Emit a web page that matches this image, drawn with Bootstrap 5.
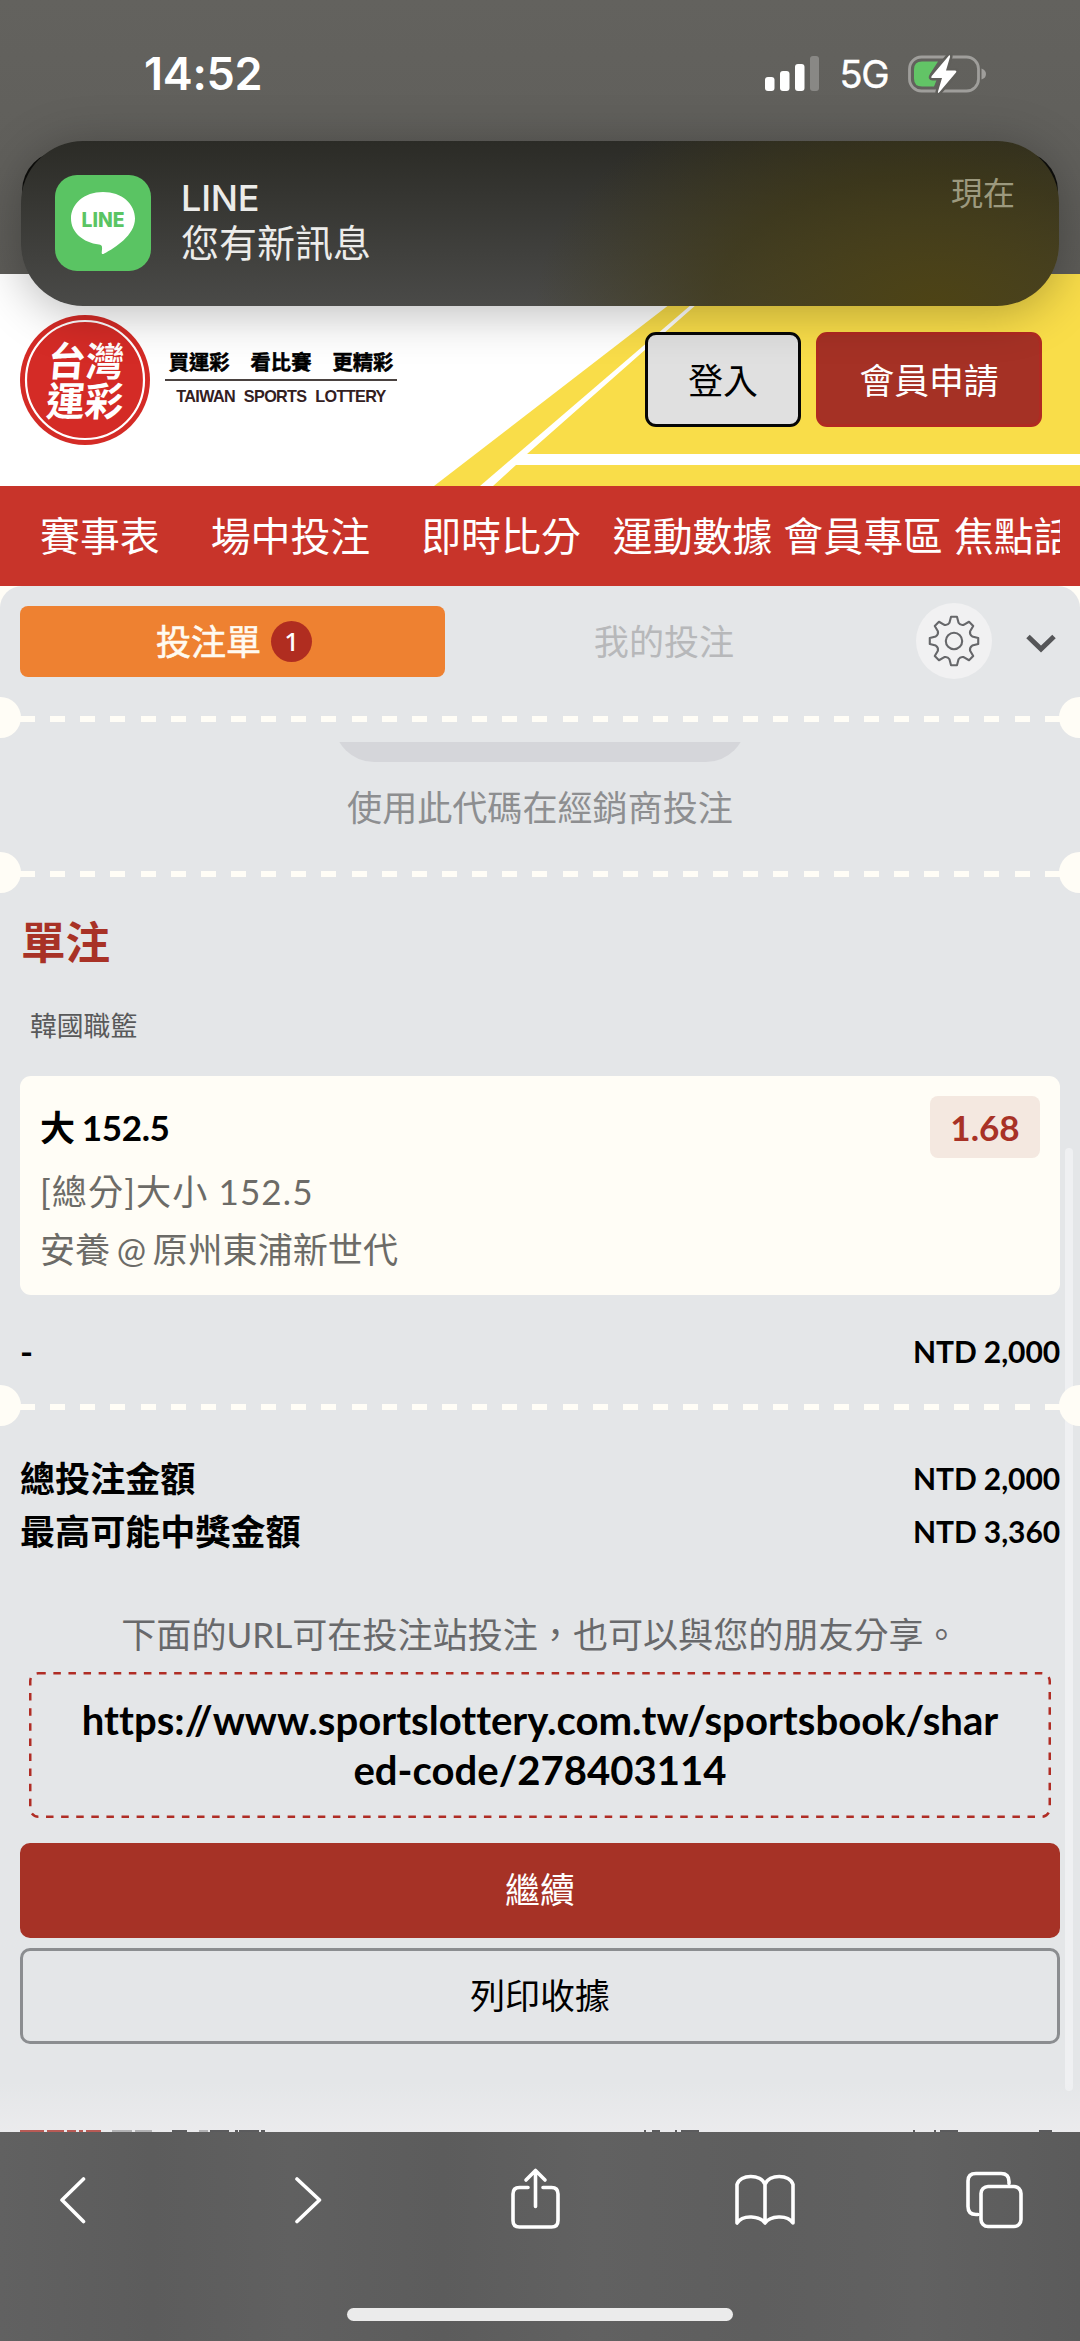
<!DOCTYPE html>
<html lang="zh-Hant">
<head>
<meta charset="utf-8">
<meta name="viewport" content="width=device-width, initial-scale=1">
<title>台灣運彩 投注單</title>
<link href="https://cdn.jsdelivr.net/npm/bootstrap@5.3.0/dist/css/bootstrap.min.css" rel="stylesheet">
<style>
body{width:1080px;height:2341px;overflow:hidden;background:#fffdf6;font-family:Lato,"Noto Sans CJK TC",sans-serif;color:#000;font-size:35.1px;line-height:50px;font-variant-ligatures:none}
svg{display:block;flex:none}
.statusbar{height:274px;background:linear-gradient(#63625e 0,#605f5b 60%,#5d5c58);color:#fff;font-family:Inter,sans-serif}
.status-row{height:148px;padding:0 93px 0 144px}
.clock{font-size:45px;font-weight:600;letter-spacing:-.3px}
.netw{font-size:38px;font-weight:400;letter-spacing:-1.5px;-webkit-text-stroke:.4px #fff;margin-left:21px}
.notice{top:141px;left:21px;width:1038px;height:165px;border-radius:62px;padding:0 44px 0 34px;z-index:5;
 background:radial-gradient(ellipse 400px 240px at 88% 100%,#4d4315 0,#41390f99 55%,#3a361500 100%),linear-gradient(#2b2b26,#4a4a48);
 font-family:Inter,"Noto Sans CJK TC",sans-serif;color:#ececea}
.notice-back{top:151px;left:22px;width:1036px;height:110px;border-radius:40px;background:#0c0c0a;z-index:4}
.notice-shade{top:141px;left:21px;width:1038px;height:165px;border-radius:62px;box-shadow:0 6px 50px rgba(0,0,0,.28);z-index:3}
.app-tile{width:96px;height:96px;border-radius:22px;background:#5ac463;margin-top:34px}
.n-title{font-size:36px;font-weight:500;line-height:40px;letter-spacing:-.2px}
.n-text{margin:37px 0 0 30px}
.n-body{font-size:38px;line-height:50px}
.n-time{font-size:32px;line-height:40px;color:#9c997e;margin-top:33px}
.site-head{height:212px;background:#fff;padding:0 38px 0 20px}
.court{inset:0}
.brand-zh{font-size:20.3px;font-weight:700;line-height:26px;gap:21px;-webkit-text-stroke:.5px #000}
.brand-en{font:bold 16.2px/22px "Liberation Sans",sans-serif;color:#33201f;word-spacing:5px;letter-spacing:-.65px;border-top:2px solid #4a4240;width:232px;margin-top:4px;padding-top:4px}
.hbtn{height:95px;border-radius:11px;font-size:34.8px;line-height:1;border-width:3px}
.hbtn-login{width:156px;background:#e0e0e0;border-color:#060606;margin-right:15px;color:#000}
.hbtn-join{width:226px;background:#a53125;border-color:#b02a22;color:#fff}
.mainnav{height:100px;background:#c8342a;color:#fff;font-size:39.9px;margin:0 20px 0 0;padding-left:40px}
.navwrap{background:#c8342a}
.mainnav a{color:#fff;text-decoration:none;white-space:nowrap;flex:none}
.slip{height:1546px;background:#e4e6e8;border-radius:22px 22px 0 0;overflow:hidden}
.tabs-row{height:111px;padding:20px 20px 0}
.tab-on{width:425px;height:71px;background:#ee8131;border-radius:8px;color:#fffaf0;gap:10px;padding-left:3px;-webkit-text-stroke:.6px #fffaf0}
.tab-on span:first-child{margin-top:-1px}
.count{width:41px;height:41px;border-radius:50%;background:#b02d20;font:500 26px/41px "Noto Sans",sans-serif;color:#fff;-webkit-text-stroke:0}
.tab-off{width:438px;height:70px;color:#b7b8ba}
.gear{width:76px;height:76px;border-radius:50%;background:#f1f1f2;margin-top:-3px}
.perf{height:41px;z-index:1}
.perf::before{content:"";display:block;height:6px;margin:3px 20px 0;background:repeating-linear-gradient(90deg,#fffdf6 0 15px,transparent 15px 30.14px)}
.perf i{width:41px;height:41px;border-radius:50%;background:#fffdf6;top:0}
.tray-clip{height:20px;overflow:hidden;margin-top:4px}
.tray{width:412px;height:100px;margin-top:-80px;border-radius:40px;background:#d5d6da}
.hint{color:#8d8e90;line-height:50px;margin-top:20px}
.h-single{font-size:44.6px;font-weight:700;color:#a83226;line-height:60px;padding:19px 20px 0 21px}
.league{font-size:26.8px;line-height:40px;color:#58595a;margin:34px 0 30px 30px}
.pick{height:219px;margin:0 20px;background:#fffdf6;border-radius:11px;padding:20px 20px 0 20px}
.pick-name{word-spacing:-1px;letter-spacing:-.4px;margin-top:-1px}
.odds{width:110px;height:62px;background:#f4e8e0;border-radius:8px;color:#a83226;line-height:62px}
.pick-line{line-height:57px;color:#6c6b67;height:57px;padding-top:1px}
.ntd{font-size:30px;font-weight:700;letter-spacing:-.1px}
.share{color:#68696b;line-height:50px;margin-top:51px;margin-bottom:13px}
.urlbox{width:1022px;height:146px;margin:0 0 25px 29px;padding:0 46px;font-size:40.1px;font-weight:700;word-break:break-all}
.wbtn{height:95px;border-radius:10px;font-size:34.9px;line-height:1;border-width:3px}
.b-go{background:#a63226;color:#fff;border-color:#a63226}
.b-print{height:96px;border-color:#8b8d90;color:#000}
.thumb{right:7px;top:562px;width:8px;height:943px;border-radius:4px;background:#eff0f2}
.fadeout{left:0;right:0;bottom:0;height:50px;background:linear-gradient(#ebebed00,#ebebed)}
.toolbar-b{height:209px;background:linear-gradient(90deg,#616161,#5c5c5c 14%,#606060 27%,#5c5c5c 41%,#616161 55%,#5e5e5e 70%,#616161 85%,#5b5b5b)}
.homebar{width:386px;height:13px;border-radius:7px;background:#ebebeb;margin:80px auto 0}
</style>
<script src="https://cdn.jsdelivr.net/npm/bootstrap@5.3.0/dist/js/bootstrap.bundle.min.js"></script>
</head>
<body class="position-relative">
<div class="statusbar">
 <div class="status-row d-flex align-items-center">
  <span class="clock">14:52</span>
  <svg class="ms-auto" width="54" height="36" viewBox="0 0 54 36" fill="#fff"><rect y="21" width="9.500" height="14" rx="3"/><rect x="15" y="15" width="9.500" height="20" rx="3"/><rect x="30" y="8" width="9.500" height="27" rx="3"/><rect x="45" width="9" height="35" rx="3" opacity=".25"/></svg>
  <span class="netw">5G</span>
  <svg style="margin-left:20px" width="79" height="42" viewBox="0 0 79 42"><rect x="1.500" y="4" width="69" height="34" rx="12" fill="none" stroke="#9f9e9b" stroke-width="2.800"/><path d="M73.500 15.500q4.500 1.500 4.500 5.500t-4.500 5.500z" fill="#9f9e9b"/><path d="M14 8.500h16L22 21v5h7l-3 7.500H14q-8 0-8-8v-9q0-8 8-8z" fill="#62c466"/><path d="M41 2.500Q42.500 1.500 42 4l-4 13.500h9q2 0 1 2L31.500 39q-2 2-1.500-.5L34 25h-9.500q-2 0-.8-2z" fill="#fff" stroke="#605f5b" stroke-width="5" paint-order="stroke"/></svg>
 </div>
</div>
<div class="notice-shade position-absolute"></div>
<div class="notice-back position-absolute"></div>
<div class="notice position-absolute d-flex">
 <div class="app-tile flex-shrink-0"><svg width="96" height="96" viewBox="0 0 96 96"><path d="M48 17C29 17 16 29 16 43.500c0 14 12 24 28 26 3.500.6 3.500 2 2.700 8-.2 1.500 1 2 2.500 1C60 73 80 60 80 43.500 80 29 67 17 48 17z" fill="#fff"/><text x="48" y="51.500" text-anchor="middle" textLength="43" lengthAdjust="spacingAndGlyphs" font-family="Inter" font-weight="800" font-size="20.500" fill="#5ac463">LINE</text></svg></div>
 <div class="flex-grow-1 n-text"><div class="n-title">LINE</div><div class="n-body">您有新訊息</div></div>
 <div class="n-time">現在</div>
</div>
<header class="site-head position-relative d-flex">
 <svg class="court position-absolute" width="1080" height="212" viewBox="0 0 1080 212"><path d="M434 212L709 0H727L480 212z" fill="#f9dd49"/><path d="M527 180L731 0H1080V180zM493 212L516 191H1080V212z" fill="#f9dd49"/></svg>
 <svg class="position-relative" style="margin-top:41px" width="130" height="130" viewBox="0 0 130 130"><circle cx="65" cy="65" r="65" fill="#d42b26"/><circle cx="65" cy="65" r="59" fill="none" stroke="#fff" stroke-width="2.200"/><g fill="#fff" font-family="Noto Sans CJK TC" font-weight="700" font-size="40" transform="skewX(-5)"><text x="32" y="61" textLength="76" lengthAdjust="spacingAndGlyphs">台灣</text><text x="34" y="101" textLength="77" lengthAdjust="spacingAndGlyphs">運彩</text></g></svg>
 <div class="position-relative" style="margin:75px 0 0 15px">
  <div class="brand-zh d-flex justify-content-center"><span>買運彩</span><span>看比賽</span><span>更精彩</span></div>
  <div class="brand-en text-center text-nowrap">TAIWAN SPORTS LOTTERY</div>
 </div>
 <div class="position-relative d-flex ms-auto" style="margin-top:58px"><a class="btn hbtn hbtn-login d-flex align-items-center justify-content-center p-0 pt-1">登入</a><a class="btn hbtn hbtn-join d-flex align-items-center justify-content-center p-0 pt-1">會員申請</a></div>
</header>
<div class="navwrap"><nav class="mainnav d-flex align-items-center overflow-hidden">
 <a style="margin-right:51px">賽事表</a><a style="margin-right:51px">場中投注</a><a style="margin-right:32px">即時比分</a><a style="margin-right:11px">運動數據</a><a style="margin-right:11px">會員專區</a><a>焦點話</a>
</nav></div>
<main class="slip position-relative">
 <div class="tabs-row d-flex">
  <div class="tab-on d-flex align-items-center justify-content-center"><span>投注單</span><span class="count text-center">1</span></div>
  <div class="tab-off d-flex align-items-center justify-content-center">我的投注</div>
  <div class="gear d-flex align-items-center justify-content-center ms-auto"><svg width="52" height="52" viewBox="-26 -26 52 52" fill="none" stroke="#66676a" stroke-width="2.100" stroke-linejoin="round"><circle r="8.200"/><path id="cog"/></svg></div>
  <svg style="margin:28px 4px 0 34px" width="30" height="20" viewBox="0 0 30 20" fill="none" stroke="#555658" stroke-width="5"><path d="M2 2.500L15 15 28 2.500"/></svg>
 </div>
 <div class="perf position-relative d-flex flex-column justify-content-center"><i class="position-absolute" style="left:-20px"></i><i class="position-absolute" style="right:-20px"></i></div>
 <section style="height:114px" class="d-flex flex-column align-items-center"><div class="tray-clip"><div class="tray"></div></div><div class="hint">使用此代碼在經銷商投注</div></section>
 <div class="perf position-relative d-flex flex-column justify-content-center"><i class="position-absolute" style="left:-20px"></i><i class="position-absolute" style="right:-20px"></i></div>
 <div class="h-single">單注</div>
 <div class="league">韓國職籃</div>
 <article class="pick">
  <div class="d-flex justify-content-between align-items-center fw-bold"><span class="pick-name">大 152.5</span><span class="odds text-center">1.68</span></div>
  <div class="pick-line mt-1" style="letter-spacing:1.1px">[總分]大小 152.5</div>
  <div class="pick-line" style="padding-top:2px;word-spacing:-2.500px">安養 @ 原州東浦新世代</div>
 </article>
 <div class="d-flex justify-content-between fw-bold" style="margin:36px 20px 14px;line-height:40px"><span>-</span><span class="ntd">NTD 2,000</span></div>
 <div class="perf position-relative d-flex flex-column justify-content-center"><i class="position-absolute" style="left:-20px"></i><i class="position-absolute" style="right:-20px"></i></div>
 <div class="fw-bold" style="margin:26px 20px 0;line-height:53px"><div class="d-flex justify-content-between"><span>總投注金額</span><span class="ntd">NTD 2,000</span></div><div class="d-flex justify-content-between"><span>最高可能中獎金額</span><span class="ntd">NTD 3,360</span></div></div>
 <div class="share text-center">下面的URL可在投注站投注，也可以與您的朋友分享。</div>
 <div class="urlbox position-relative d-flex align-items-center justify-content-center text-center"><svg class="position-absolute top-0 start-0" width="1022" height="146"><rect x="1.250" y="1.250" width="1019.500" height="143.500" rx="8" fill="none" stroke="#b02d25" stroke-width="2.500" stroke-dasharray="7.500 7.600"/></svg><span>https://www.sportslottery.com.tw/sportsbook/shared-code/278403114</span></div>
 <div class="d-grid mx-3 px-1" style="gap:10px"><button class="btn wbtn b-go">繼續</button><button class="btn wbtn b-print">列印收據</button></div>
 <div class="thumb position-absolute"></div>
 <div class="fadeout position-absolute"></div>
 <svg class="position-absolute start-0 bottom-0" width="1080" height="2" fill="#5b5b5d"><path fill="#b85a55" d="M20 0h24v2H20zM47 0h17v2H47zM67 0h9v2h-9zM79 0h4v2h-4zM86 0h15v2H86z"/><path d="M112 0h20v2h-20zM135 0h17v2h-17zM199 0h9v2h-9z" opacity=".4"/><path d="M172 0h15v2h-15zM210 0h19v2h-19zM235 0h3v2h-3zM239 0h20v2h-20zM261 0h4v2h-4zM644 0h2v2h-2zM652 0h8v2h-8zM675 0h2v2h-2zM681 0h18v2h-18zM913 0h2v2h-2zM934 0h2v2h-2zM940 0h18v2h-18zM1039 0h13v2h-13z"/></svg>
</main>
<footer class="toolbar-b">
 <svg width="1080" height="96" viewBox="0 2132 1080 96" overflow="visible" fill="none" stroke="#fff" stroke-width="3.600" stroke-linecap="round" stroke-linejoin="round"><path d="M83.500 2179L62 2200l21.500 21.500M297 2179l22.500 21L297 2221.500"/><path d="M528 2187.500h-8.500q-6.500 0-6.500 6.500v26.500q0 6.500 6.500 6.500h32q6.500 0 6.500-6.500V2194q0-6.500-6.500-6.500H543M535.500 2206.500V2171M526 2180l9.500-9.500 9.500 9.500"/><path d="M765 2223c-5-7-22-9-28 0v-38.500c3-10.500 24-11 28 0 4-11 25-10.500 28 0V2223c-6-9-23-7-28 0zM765 2184.500V2223"/><rect x="981" y="2186.500" width="40" height="40" rx="7"/><path d="M978 2214.500h-2q-8 0-8-8V2181q0-7.500 8-7.500h25q8 0 8 8v2"/></svg>
 <div class="homebar"></div>
</footer>
<script>
// Eight-tooth cog: flat-topped teeth joined by rounded valleys
(function(){var d='';function p(r,deg){var a=deg*Math.PI/180;return (r*Math.sin(a)).toFixed(2)+' '+(-r*Math.cos(a)).toFixed(2)}
for(var k=0;k<8;k++){var o=k*45;d+=(k?'L':'M')+p(24.4,o-7)+'L'+p(24.4,o+7)+'L'+p(18.8,o+14)+'Q'+p(16.6,o+22.5)+' '+p(18.8,o+31)}
document.getElementById('cog').setAttribute('d',d+'Z')})();
</script>
</body>
</html>
